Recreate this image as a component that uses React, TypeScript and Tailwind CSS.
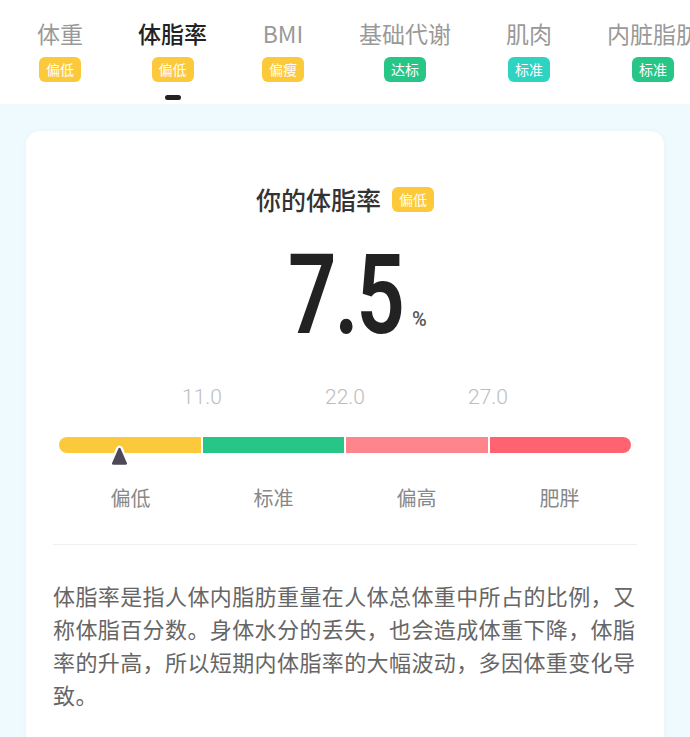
import React from 'react';

const tabs = [
  { label: '体重', badge: '偏低', color: 'bg-[#fcc93a]' },
  { label: '体脂率', badge: '偏低', color: 'bg-[#fcc93a]', active: true },
  { label: 'BMI', badge: '偏瘦', color: 'bg-[#fcc93a]' },
  { label: '基础代谢', badge: '达标', color: 'bg-[#27c588]' },
  { label: '肌肉', badge: '标准', color: 'bg-[#2fd3c2]' },
  { label: '内脏脂肪', badge: '标准', color: 'bg-[#27c588]' },
];

const segments = ['bg-[#fcc93a] rounded-l-full', 'bg-[#27c588]', 'bg-[#ff858d]', 'bg-[#ff636f] rounded-r-full'];
const levels = ['偏低', '标准', '偏高', '肥胖'];
const marks = ['11.0', '22.0', '27.0'];

export default function App() {
  return (
    <div className="w-[690px] h-[737px] overflow-hidden bg-[#eefafd] font-['Noto_Sans_CJK_SC',sans-serif]">
      {/* Tabs */}
      <div className="h-[104px] bg-white flex gap-[55px] pl-[37px] whitespace-nowrap overflow-hidden">
        {tabs.map((t) => (
          <div key={t.label} className="flex flex-col items-center pt-[18px] shrink-0">
            <span
              className={`text-[23px] leading-[30px] ${
                t.active ? 'text-[#222] font-medium' : 'text-[#999]'
              }`}
            >
              {t.label}
            </span>
            <span
              className={`mt-[9px] h-[25px] px-[7px] rounded-[6px] text-white text-[14px] leading-[25px] ${t.color}`}
            >
              {t.badge}
            </span>
            {t.active && <span className="mt-[13px] w-[16px] h-[5px] rounded-full bg-[#222]" />}
          </div>
        ))}
      </div>

      {/* Card */}
      <div className="mx-[26px] mt-[27px] rounded-[14px] bg-white px-[27px] pb-[40px] shadow-[0_0_6px_rgba(0,0,0,0.03)]">
        <div className="pt-[52px] flex items-center justify-center gap-[11px]">
          <span className="text-[25px] leading-[32px] font-medium text-[#333]">你的体脂率</span>
          <span className="h-[25px] px-[7px] rounded-[6px] bg-[#fcc93a] text-white text-[14px] leading-[25px]">
            偏低
          </span>
        </div>

        <div className="mt-[24px] flex justify-center">
          <div className="relative w-[118px] flex justify-center">
            <span className="inline-block scale-x-[0.76] whitespace-nowrap font-['Roboto',sans-serif] font-semibold text-[112px] leading-[112px] text-[#222] tracking-[-3px]">
              7.5
            </span>
            <span className="absolute left-full bottom-[22px] ml-[8px] font-['Roboto',sans-serif] font-medium text-[20px] leading-[20px] text-[#555]">
              %
            </span>
          </div>
        </div>

        {/* Scale */}
        <div className="px-[6px]">
          <div className="mt-[32px] grid grid-cols-4 font-['Roboto',sans-serif] font-light text-[21px] leading-[28px] text-[#bdbdbd]">
            {marks.map((m) => (
              <div key={m} className="flex justify-end">
                <span className="translate-x-1/2">{m}</span>
              </div>
            ))}
          </div>

          <div className="relative mt-[26px] h-[16px] flex gap-[2px]">
            {segments.map((s) => (
              <div key={s} className={`flex-1 h-full ${s}`} />
            ))}
            <svg
              className="absolute left-[50px] top-[8px]"
              width="21"
              height="23"
              viewBox="0 0 21 23"
            >
              <path
                d="M8.3 3.2 Q10.5 0.2 12.7 3.2 L18.8 17.2 Q20.2 20.8 16.2 20.8 L4.8 20.8 Q0.8 20.8 2.2 17.2 Z"
                fill="#4e4956"
                stroke="#fff"
                strokeWidth="2.2"
                strokeLinejoin="round"
              />
            </svg>
          </div>

          <div className="mt-[31px] grid grid-cols-4 text-[20px] leading-[28px] text-[#888] text-center">
            {levels.map((l) => (
              <span key={l}>{l}</span>
            ))}
          </div>
        </div>

        <div className="mt-[32px] h-px bg-[#efefef]" />

        <p className="mt-[34px] text-[22px] leading-[33px] tracking-[0.4px] text-[#666]">
          体脂率是指人体内脂肪重量在人体总体重中所占的比例，又称体脂百分数。身体水分的丢失，也会造成体重下降，体脂率的升高，所以短期内体脂率的大幅波动，多因体重变化导致。
        </p>
      </div>
    </div>
  );
}
